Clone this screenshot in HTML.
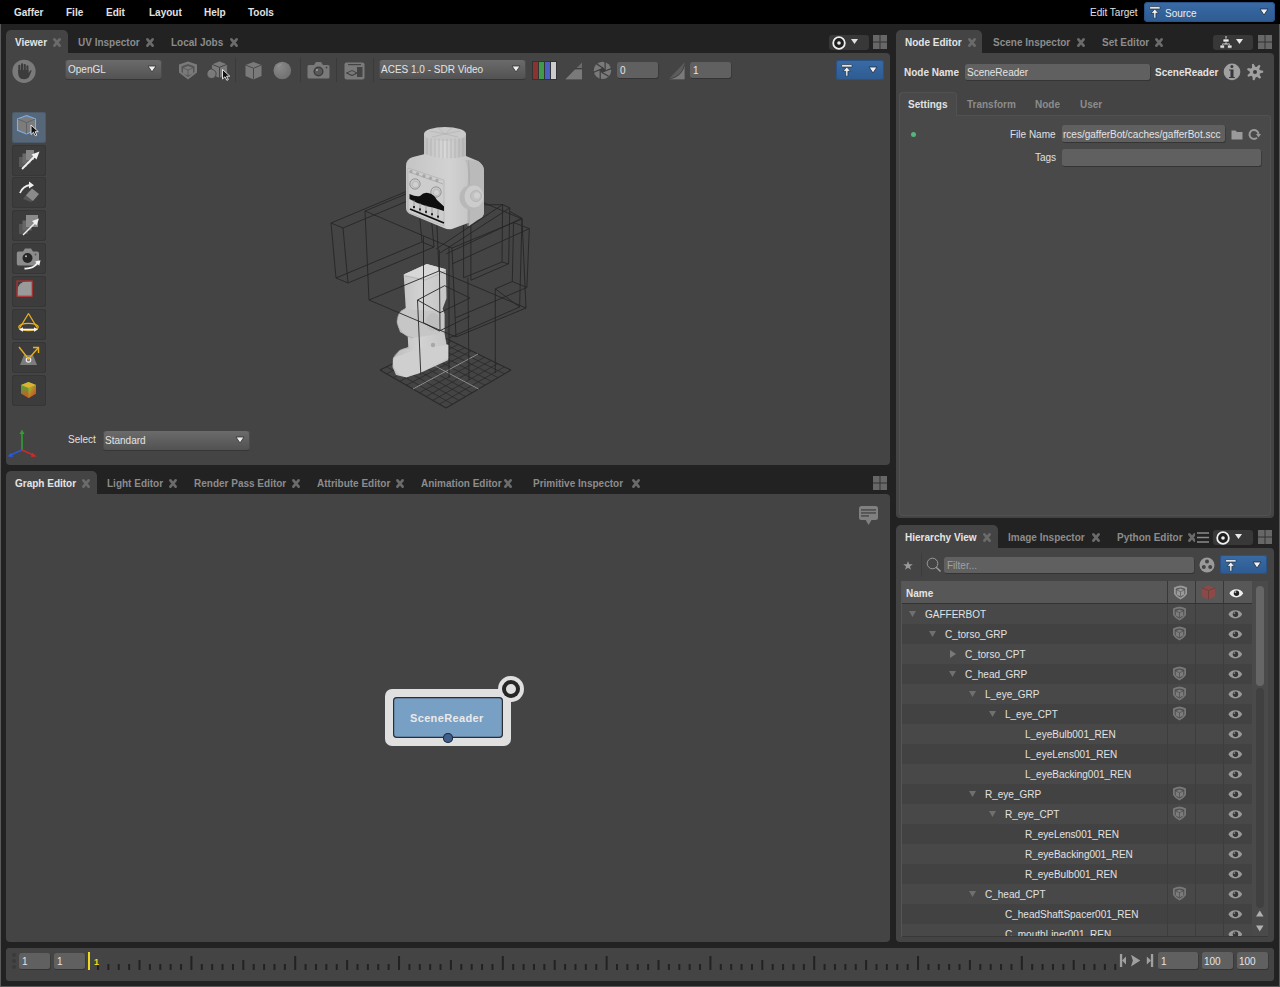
<!DOCTYPE html><html><head><meta charset="utf-8"><style>
*{box-sizing:border-box;margin:0;padding:0}
html,body{width:1280px;height:987px;overflow:hidden}
body{background:#222;font-family:"Liberation Sans",sans-serif;font-size:10px;color:#ddd;position:relative}
.a{position:absolute}
.t{position:absolute;white-space:nowrap;line-height:12px}
.b{font-weight:bold}
.pane{position:absolute;background:#444;border-radius:3px}
.tabbg{position:absolute;background:#444;border-radius:5px 5px 0 0}
.tt{position:absolute;white-space:nowrap;line-height:12px;font-weight:bold;color:#8c8c8c}
.tt.on{color:#e4e4e4}
.fld{position:absolute;background:#606060;border-radius:2.5px;box-shadow:0.6px 1px 0 #343434;overflow:hidden}
.dd{position:absolute;border-radius:3px;background:linear-gradient(#6b6b6b,#525252);box-shadow:0 1px 0 #363636, inset 1px 0 0 #4c4c4c, inset -1px 0 0 #4c4c4c}
svg{position:absolute;overflow:visible}
</style></head><body>
<div class="a" style="left:0;top:24px;width:1px;height:963px;background:#5a5a5a"></div>
<div class="a" style="left:1279px;top:24px;width:1px;height:963px;background:#5a5a5a"></div>
<div class="a" style="left:0;top:986px;width:1280px;height:1px;background:#5a5a5a"></div>
<div class="a" style="left:0;top:0;width:1280px;height:24px;background:#000"></div>
<div class="t" style="left:14px;top:7px;color:#e2e2e2;font-weight:bold;">Gaffer</div>
<div class="t" style="left:66px;top:7px;color:#e2e2e2;font-weight:bold;">File</div>
<div class="t" style="left:106px;top:7px;color:#e2e2e2;font-weight:bold;">Edit</div>
<div class="t" style="left:149px;top:7px;color:#e2e2e2;font-weight:bold;">Layout</div>
<div class="t" style="left:204px;top:7px;color:#e2e2e2;font-weight:bold;">Help</div>
<div class="t" style="left:248px;top:7px;color:#e2e2e2;font-weight:bold;">Tools</div>
<div class="t" style="left:1090px;top:7px;color:#e2e2e2;">Edit Target</div>
<div class="a" style="left:1144px;top:2px;width:131px;height:20px;border-radius:4px;background:linear-gradient(#3a6ba6,#2d5b91);box-shadow:inset 0 0 0 1px #2a5286"></div>
<svg style="left:1149px;top:6px" width="12" height="13"><g stroke="#1c2a3c" stroke-width="0.7" fill="#f2f2f2"><rect x="0.6" y="0.6" width="10.4" height="2.4" rx="0.5"/><path d="M5.8 3L9.6 7.3H6.9V12.2H4.7V7.3H2Z"/></g></svg>
<div class="t" style="left:1165px;top:8px;color:#eeeeee;">Source</div>
<svg style="left:1260px;top:9px" width="8" height="6"><path d="M0 0H8L4.0 6Z" fill="#f2f2f2" stroke="#1c2a3c" stroke-width="0.8" stroke-linejoin="round"/></svg>
<div class="pane" style="left:6px;top:53px;width:884px;height:412px;border-radius:0 4px 4px 4px"></div>
<div class="tabbg" style="left:6px;top:30px;width:62px;height:24px"></div>
<div class="tt on" style="left:15px;top:37px">Viewer</div>
<svg style="left:53px;top:38px" width="8" height="9"><path d="M1.4 1.4L6.6 7.6M6.6 1.4L1.4 7.6" stroke="#6b6b6b" stroke-width="2.7" stroke-linecap="round"/></svg>
<div class="tt" style="left:78px;top:37px">UV Inspector</div>
<svg style="left:146px;top:38px" width="8" height="9"><path d="M1.4 1.4L6.6 7.6M6.6 1.4L1.4 7.6" stroke="#6b6b6b" stroke-width="2.7" stroke-linecap="round"/></svg>
<div class="tt" style="left:171px;top:37px">Local Jobs</div>
<svg style="left:230px;top:38px" width="8" height="9"><path d="M1.4 1.4L6.6 7.6M6.6 1.4L1.4 7.6" stroke="#6b6b6b" stroke-width="2.7" stroke-linecap="round"/></svg>
<div class="a" style="left:829px;top:35px;width:40px;height:15px;border-radius:3px;background:#383838"></div>
<svg style="left:832px;top:36px" width="14" height="14"><circle cx="7" cy="7" r="5.8" stroke="#f0f0f0" stroke-width="1.8" fill="#1e1e1e"/><circle cx="7" cy="7" r="1.8" fill="#f0f0f0"/></svg>
<svg style="left:851px;top:39px" width="7" height="5"><path d="M0 0H7L3.5 5Z" fill="#e0e0e0"/></svg>
<svg style="left:873px;top:35px" width="14" height="14"><rect x="0" y="0" width="14" height="14" fill="#333"/><rect x="0" y="0" width="6.5" height="6.5" fill="#676767"/><rect x="7.5" y="0" width="6.5" height="6.5" fill="#676767"/><rect x="0" y="7.5" width="6.5" height="6.5" fill="#676767"/><rect x="7.5" y="7.5" width="6.5" height="6.5" fill="#676767"/></svg>
<svg style="left:0;top:0" width="890" height="465"><line x1="380.0" y1="370.0" x2="446.0" y2="408.0" stroke="#2a2a2a" stroke-width="1.1"/><line x1="380.0" y1="370.0" x2="445.0" y2="338.0" stroke="#2a2a2a" stroke-width="1.1"/><line x1="386.5" y1="366.8" x2="452.5" y2="404.2" stroke="#2a2a2a" stroke-width="0.8"/><line x1="386.6" y1="373.8" x2="451.6" y2="341.2" stroke="#2a2a2a" stroke-width="0.8"/><line x1="393.0" y1="363.6" x2="459.0" y2="400.4" stroke="#2a2a2a" stroke-width="0.8"/><line x1="393.2" y1="377.6" x2="458.2" y2="344.4" stroke="#2a2a2a" stroke-width="0.8"/><line x1="399.5" y1="360.4" x2="465.5" y2="396.6" stroke="#2a2a2a" stroke-width="0.8"/><line x1="399.8" y1="381.4" x2="464.8" y2="347.6" stroke="#2a2a2a" stroke-width="0.8"/><line x1="406.0" y1="357.2" x2="472.0" y2="392.8" stroke="#2a2a2a" stroke-width="0.8"/><line x1="406.4" y1="385.2" x2="471.4" y2="350.8" stroke="#2a2a2a" stroke-width="0.8"/><line x1="412.5" y1="354.0" x2="478.5" y2="389.0" stroke="#2a2a2a" stroke-width="0.8"/><line x1="413.0" y1="389.0" x2="478.0" y2="354.0" stroke="#2a2a2a" stroke-width="0.8"/><line x1="419.0" y1="350.8" x2="485.0" y2="385.2" stroke="#2a2a2a" stroke-width="0.8"/><line x1="419.6" y1="392.8" x2="484.6" y2="357.2" stroke="#2a2a2a" stroke-width="0.8"/><line x1="425.5" y1="347.6" x2="491.5" y2="381.4" stroke="#2a2a2a" stroke-width="0.8"/><line x1="426.2" y1="396.6" x2="491.2" y2="360.4" stroke="#2a2a2a" stroke-width="0.8"/><line x1="432.0" y1="344.4" x2="498.0" y2="377.6" stroke="#2a2a2a" stroke-width="0.8"/><line x1="432.8" y1="400.4" x2="497.8" y2="363.6" stroke="#2a2a2a" stroke-width="0.8"/><line x1="438.5" y1="341.2" x2="504.5" y2="373.8" stroke="#2a2a2a" stroke-width="0.8"/><line x1="439.4" y1="404.2" x2="504.4" y2="366.8" stroke="#2a2a2a" stroke-width="0.8"/><line x1="445.0" y1="338.0" x2="511.0" y2="370.0" stroke="#2a2a2a" stroke-width="1.1"/><line x1="446.0" y1="408.0" x2="511.0" y2="370.0" stroke="#2a2a2a" stroke-width="1.1"/><line x1="413.0" y1="389.0" x2="478.0" y2="354.0" stroke="#9a9a9a" stroke-width="0.9"/><line x1="412.5" y1="354.0" x2="478.5" y2="389.0" stroke="#9a9a9a" stroke-width="0.9"/><defs><linearGradient id="lg" x1="0" y1="0" x2="1" y2="0"><stop offset="0" stop-color="#bdbdbd"/><stop offset="0.5" stop-color="#d2d2d2"/><stop offset="1" stop-color="#c4c4c4"/></linearGradient></defs><path d="M403.7 274.5L426.8 264L445.9 269.2L446.5 298.2L442.6 308.7L444.6 314L444.6 333.8L446.5 344.3L448.5 345L448.5 360L420 373L406.4 377.5L396 375L392.5 367L393 358L400 350L408.3 347L407.7 336L400 332L397 322L401 311L405.7 308Z" fill="url(#lg)"/><path d="M403.7 274.5L426.8 264L445.9 269.2L425 279Z" fill="#d8d8d8"/><path d="M405 276L425 280L446 271" stroke="#a8a8a8" stroke-width="0.6" fill="none"/><path d="M397 322Q398 310 405 309L444 312L444 333L413 338Q399 335 397 322Z" fill="#c6c6c6"/><path d="M405 309Q397 312 397 322Q399 335 413 338" stroke="#a0a0a0" stroke-width="0.6" fill="none"/><ellipse cx="433" cy="322" rx="7" ry="9" fill="#bebebe"/><path d="M393 358L420 348L448.5 345L448.5 358L420 372L406 377Q392 374 393 358Z" fill="#cfcfcf"/><path d="M393 360Q396 348 410 348" stroke="#a8a8a8" stroke-width="0.6" fill="none"/><circle cx="433" cy="345" r="2.2" fill="#a8a8a8"/><line x1="331.0" y1="223.0" x2="417.0" y2="187.0" stroke="#262626" stroke-width="0.9"/><line x1="331.0" y1="223.0" x2="343.0" y2="228.0" stroke="#262626" stroke-width="0.9"/><line x1="331.0" y1="223.0" x2="336.0" y2="278.0" stroke="#262626" stroke-width="0.9"/><line x1="336.0" y1="278.0" x2="422.0" y2="242.0" stroke="#262626" stroke-width="0.9"/><line x1="336.0" y1="278.0" x2="348.0" y2="283.0" stroke="#262626" stroke-width="0.9"/><line x1="343.0" y1="228.0" x2="429.0" y2="192.0" stroke="#262626" stroke-width="0.9"/><line x1="343.0" y1="228.0" x2="348.0" y2="283.0" stroke="#262626" stroke-width="0.9"/><line x1="348.0" y1="283.0" x2="434.0" y2="247.0" stroke="#262626" stroke-width="0.9"/><line x1="417.0" y1="187.0" x2="429.0" y2="192.0" stroke="#262626" stroke-width="0.9"/><line x1="417.0" y1="187.0" x2="422.0" y2="242.0" stroke="#262626" stroke-width="0.9"/><line x1="422.0" y1="242.0" x2="434.0" y2="247.0" stroke="#262626" stroke-width="0.9"/><line x1="429.0" y1="192.0" x2="434.0" y2="247.0" stroke="#262626" stroke-width="0.9"/><line x1="365.0" y1="211.0" x2="435.0" y2="182.0" stroke="#262626" stroke-width="0.9"/><line x1="365.0" y1="211.0" x2="452.0" y2="248.0" stroke="#262626" stroke-width="0.9"/><line x1="365.0" y1="211.0" x2="369.0" y2="300.0" stroke="#262626" stroke-width="0.9"/><line x1="369.0" y1="300.0" x2="439.0" y2="271.0" stroke="#262626" stroke-width="0.9"/><line x1="369.0" y1="300.0" x2="456.0" y2="337.0" stroke="#262626" stroke-width="0.9"/><line x1="452.0" y1="248.0" x2="522.0" y2="219.0" stroke="#262626" stroke-width="0.9"/><line x1="452.0" y1="248.0" x2="456.0" y2="337.0" stroke="#262626" stroke-width="0.9"/><line x1="456.0" y1="337.0" x2="526.0" y2="308.0" stroke="#262626" stroke-width="0.9"/><line x1="435.0" y1="182.0" x2="522.0" y2="219.0" stroke="#262626" stroke-width="0.9"/><line x1="435.0" y1="182.0" x2="439.0" y2="271.0" stroke="#262626" stroke-width="0.9"/><line x1="439.0" y1="271.0" x2="526.0" y2="308.0" stroke="#262626" stroke-width="0.9"/><line x1="522.0" y1="219.0" x2="526.0" y2="308.0" stroke="#262626" stroke-width="0.9"/><line x1="483.1" y1="204.9" x2="502.6" y2="204.6" stroke="#262626" stroke-width="0.9"/><line x1="502.6" y1="204.6" x2="509.8" y2="207.9" stroke="#262626" stroke-width="0.9"/><line x1="502.6" y1="204.6" x2="502.0" y2="262.0" stroke="#262626" stroke-width="0.9"/><line x1="509.8" y1="207.9" x2="508.6" y2="263.8" stroke="#262626" stroke-width="0.9"/><line x1="502.0" y1="262.0" x2="508.6" y2="263.8" stroke="#262626" stroke-width="0.9"/><line x1="509.8" y1="207.9" x2="440.0" y2="253.0" stroke="#262626" stroke-width="0.9"/><line x1="502.6" y1="204.6" x2="436.0" y2="249.0" stroke="#262626" stroke-width="0.9"/><line x1="508.6" y1="263.8" x2="471.0" y2="280.2" stroke="#262626" stroke-width="0.9"/><line x1="502.0" y1="262.0" x2="463.6" y2="277.8" stroke="#262626" stroke-width="0.9"/><line x1="470.9" y1="221.9" x2="470.9" y2="280.2" stroke="#262626" stroke-width="0.9"/><line x1="463.6" y1="225.0" x2="463.6" y2="277.8" stroke="#262626" stroke-width="0.9"/><line x1="509.8" y1="211.5" x2="522.0" y2="218.2" stroke="#262626" stroke-width="0.9"/><line x1="522.0" y1="218.2" x2="519.6" y2="307.0" stroke="#262626" stroke-width="0.9"/><line x1="513.5" y1="222.5" x2="512.3" y2="281.5" stroke="#262626" stroke-width="0.9"/><line x1="513.5" y1="222.5" x2="529.3" y2="228.6" stroke="#262626" stroke-width="0.9"/><line x1="529.3" y1="228.6" x2="526.9" y2="287.5" stroke="#262626" stroke-width="0.9"/><line x1="512.3" y1="281.5" x2="526.9" y2="287.5" stroke="#262626" stroke-width="0.9"/><line x1="529.3" y1="228.6" x2="452.0" y2="264.0" stroke="#262626" stroke-width="0.9"/><line x1="522.0" y1="218.2" x2="446.0" y2="254.0" stroke="#262626" stroke-width="0.9"/><line x1="526.9" y1="287.5" x2="455.0" y2="318.0" stroke="#262626" stroke-width="0.9"/><line x1="512.3" y1="281.5" x2="495.3" y2="288.8" stroke="#262626" stroke-width="0.9"/><line x1="495.3" y1="288.8" x2="495.3" y2="373.0" stroke="#262626" stroke-width="0.9"/><line x1="467.9" y1="277.8" x2="469.0" y2="380.0" stroke="#262626" stroke-width="0.9"/><line x1="495.3" y1="288.8" x2="519.6" y2="307.0" stroke="#262626" stroke-width="0.9"/><line x1="519.6" y1="307.0" x2="449.0" y2="338.0" stroke="#262626" stroke-width="0.9"/><line x1="449.0" y1="246.0" x2="449.0" y2="378.0" stroke="#262626" stroke-width="0.9"/><line x1="417.5" y1="300.0" x2="444.6" y2="285.7" stroke="#262626" stroke-width="0.9"/><line x1="417.5" y1="300.0" x2="440.0" y2="312.7" stroke="#262626" stroke-width="0.9"/><line x1="440.0" y1="312.7" x2="470.0" y2="298.0" stroke="#262626" stroke-width="0.9"/><line x1="417.5" y1="300.0" x2="420.8" y2="374.6" stroke="#262626" stroke-width="0.9"/><line x1="423.5" y1="236.0" x2="423.5" y2="323.0" stroke="#262626" stroke-width="0.9"/><line x1="439.3" y1="250.0" x2="440.0" y2="331.0" stroke="#262626" stroke-width="0.9"/><line x1="424.0" y1="323.0" x2="439.3" y2="331.0" stroke="#262626" stroke-width="0.9"/><line x1="439.3" y1="331.0" x2="470.0" y2="316.0" stroke="#262626" stroke-width="0.9"/><line x1="444.6" y1="285.7" x2="470.0" y2="298.0" stroke="#262626" stroke-width="0.9"/><defs><linearGradient id="hg" x1="0" y1="0" x2="1" y2="0"><stop offset="0" stop-color="#c4c4c4"/><stop offset="0.55" stop-color="#d2d2d2"/><stop offset="1" stop-color="#bdbdbd"/></linearGradient><linearGradient id="cg" x1="0" y1="0" x2="1" y2="0"><stop offset="0" stop-color="#c0c0c0"/><stop offset="0.5" stop-color="#d8d8d8"/><stop offset="1" stop-color="#b8b8b8"/></linearGradient></defs><path d="M424 134V162Q445 170 466 162V134Z" fill="url(#cg)"/><ellipse cx="445" cy="134" rx="21" ry="7" fill="#c9c9c9"/><path d="M445 134L430 131M445 134L438 128M445 134L452 128M445 134L460 131M445 134L458 137M445 134L432 137" stroke="#b0b0b0" stroke-width="0.6"/><line x1="427" y1="138.1" x2="427" y2="165" stroke="#a8a8a8" stroke-width="0.6"/><line x1="431" y1="138.3" x2="431" y2="165" stroke="#a8a8a8" stroke-width="0.6"/><line x1="435" y1="138.5" x2="435" y2="165" stroke="#a8a8a8" stroke-width="0.6"/><line x1="439" y1="138.7" x2="439" y2="167" stroke="#a8a8a8" stroke-width="0.6"/><line x1="443" y1="138.9" x2="443" y2="167" stroke="#a8a8a8" stroke-width="0.6"/><line x1="447" y1="138.9" x2="447" y2="167" stroke="#a8a8a8" stroke-width="0.6"/><line x1="451" y1="138.7" x2="451" y2="167" stroke="#a8a8a8" stroke-width="0.6"/><line x1="455" y1="138.5" x2="455" y2="165" stroke="#a8a8a8" stroke-width="0.6"/><line x1="459" y1="138.3" x2="459" y2="165" stroke="#a8a8a8" stroke-width="0.6"/><line x1="463" y1="138.1" x2="463" y2="165" stroke="#a8a8a8" stroke-width="0.6"/><path d="M406 166Q406 159 413 157L425 154Q445 162 466 156L478 161Q484 165 484 171V212Q484 217 479 219L452 229Q448 230 444 228L410 214Q406 212 406 208Z" fill="url(#hg)"/><path d="M466 160Q470 168 468 185V226" stroke="#b0b0b0" stroke-width="0.8" fill="none"/><path d="M468 160Q470 170 469 190V226L479 219Q484 217 484 212V171Q484 165 478 161Z" fill="#bababa"/><path d="M468 160Q470 170 469 190V226" stroke="#a0a0a0" stroke-width="0.7" fill="none"/><path d="M408 168L444 180V226L408 212Z" fill="#cdcdcd" stroke="#a5a5a5" stroke-width="0.5"/><path d="M409 172L443 184" stroke="#9a9a9a" stroke-width="0.6"/><circle cx="411.0" cy="171.5" r="1.3" fill="#b0b0b0" stroke="#8a8a8a" stroke-width="0.4"/><circle cx="417.5" cy="173.7" r="1.3" fill="#b0b0b0" stroke="#8a8a8a" stroke-width="0.4"/><circle cx="424.0" cy="175.9" r="1.3" fill="#b0b0b0" stroke="#8a8a8a" stroke-width="0.4"/><circle cx="430.5" cy="178.1" r="1.3" fill="#b0b0b0" stroke="#8a8a8a" stroke-width="0.4"/><circle cx="437.0" cy="180.3" r="1.3" fill="#b0b0b0" stroke="#8a8a8a" stroke-width="0.4"/><circle cx="415" cy="184" r="5.2" fill="#c8c8c8" stroke="#888" stroke-width="0.8"/><circle cx="415.5" cy="184.5" r="3.2" fill="#d0d0d0" stroke="#a0a0a0" stroke-width="0.5"/><circle cx="436" cy="192" r="5.2" fill="#c8c8c8" stroke="#888" stroke-width="0.8"/><circle cx="436.5" cy="192.5" r="3.2" fill="#d0d0d0" stroke="#a0a0a0" stroke-width="0.5"/><path d="M409.5 194Q416 197 420 196Q424 192 428 193Q434 194 437 200L444 206.5V211Q436 208 426 206Q418 204 409.5 199Z" fill="#0e0e0e"/><path d="M410 209L444 223" stroke="#0e0e0e" stroke-width="1.8"/><path d="M414 200V210M420 203V212M426 205V215M432 207V217M438 209V219" stroke="#8a8a8a" stroke-width="0.7"/><rect x="413" y="206.0" width="2" height="2" fill="#222"/><rect x="419" y="208.4" width="2" height="2" fill="#222"/><rect x="425" y="210.8" width="2" height="2" fill="#222"/><rect x="431" y="213.2" width="2" height="2" fill="#222"/><rect x="437" y="215.6" width="2" height="2" fill="#222"/><ellipse cx="471" cy="197.5" rx="11.5" ry="12.5" fill="#b8b8b8"/><ellipse cx="474" cy="196.5" rx="9.5" ry="11" fill="#cccccc"/><circle cx="476" cy="196" r="5.5" fill="#c2c2c2" stroke="#a8a8a8" stroke-width="0.6"/><circle cx="477" cy="195.5" r="3" fill="#d0d0d0"/></svg>
<svg style="left:12px;top:59px" width="24" height="25"><circle cx="12" cy="12.3" r="11.6" fill="#7a7a7a"/><g fill="#3c3c3c"><rect x="6.3" y="5.8" width="2.1" height="9" rx="1"/><rect x="9" y="4.3" width="2.1" height="10" rx="1"/><rect x="11.7" y="5" width="2.1" height="10" rx="1"/><rect x="14.4" y="6.3" width="2" height="9" rx="1"/><path d="M6.3 11H16.4V14.2L18.3 11.6Q19.2 10.7 19.7 11.6L17.2 17.5Q15.8 20.3 12.2 20.3Q8.3 20.3 7 17.8Q6.3 16.5 6.3 14.5Z"/></g></svg>
<div class="dd" style="left:65px;top:60px;width:97px;height:19px"></div>
<div class="t" style="left:68px;top:64px;color:#e4e4e4;">OpenGL</div>
<svg style="left:148px;top:66px" width="8" height="6"><path d="M0 0H8L4.0 6Z" fill="#eeeeee" stroke="#2e2e2e" stroke-width="0.8" stroke-linejoin="round"/></svg>
<svg style="left:178px;top:61px" width="20" height="19" viewBox="0 0 20 19"><path d="M10 0.5L19 3.5V11.5L10 18.5L1 11.5V3.5Z" fill="#7a7a7a"/><path d="M10 3L16.5 5.2V11L10 16L3.5 11V5.2Z" fill="#555"/><path d="M10 5L15 7V12.5L10 14.5L5 12.5V7Z" fill="#7a7a7a"/><path d="M5 7L10 9L15 7M10 9V14.5" stroke="#555" stroke-width="0.8" fill="none"/></svg>
<svg style="left:206px;top:61px" width="24" height="20"><path d="M13.5 0L21.4 3.2V14L13.5 17.3L5.6 14V3.2Z" fill="#7a7a7a" stroke="#3a3a3a" stroke-width="0.6"/><path d="M5.6 3.2L13.5 6.3L21.4 3.2M13.5 6.3V17.3" stroke="#3e3e3e" stroke-width="0.9" fill="none"/><circle cx="5.5" cy="12.9" r="4.6" fill="#7a7a7a" stroke="#3c3c3c" stroke-width="0.8"/><path d="M3 10.5Q4 9 5.5 8.8" stroke="#9a9a9a" stroke-width="0.7" fill="none"/></svg>
<svg style="left:222px;top:69px" width="8" height="12"><path d="M0.5 0.5V10L3 7.8L4.8 11.3L6.3 10.6L4.6 7.2H7.8Z" fill="#111" stroke="#eee" stroke-width="0.9"/></svg>
<div class="a" style="left:235px;top:58px;width:1px;height:24px;background:#3a3a3a"></div>
<div class="a" style="left:300px;top:58px;width:1px;height:24px;background:#3a3a3a"></div>
<div class="a" style="left:336px;top:58px;width:1px;height:24px;background:#3a3a3a"></div>
<div class="a" style="left:373px;top:58px;width:1px;height:24px;background:#3a3a3a"></div>
<svg style="left:245px;top:61px" width="17" height="19"><path d="M8.5 1L16.5 4V15L8.5 18.5L0.5 15V4Z" fill="#7a7a7a"/><path d="M0.5 4L8.5 7.2L16.5 4M8.5 7.2V18.5" stroke="#4a4a4a" stroke-width="1" fill="none"/></svg>
<svg style="left:273px;top:61px" width="19" height="19"><defs><radialGradient id="sg" cx="0.35" cy="0.3" r="0.8"><stop offset="0" stop-color="#8a8a8a"/><stop offset="1" stop-color="#6e6e6e"/></radialGradient></defs><circle cx="9.3" cy="9.5" r="8.8" fill="url(#sg)"/><path d="M4.5 6Q6 3.5 8.5 3" stroke="#9a9a9a" stroke-width="0.8" fill="none"/></svg>
<svg style="left:307px;top:61px" width="23" height="18"><path d="M2 4H7L9 1H14L16 4H21Q22.5 4 22.5 5.5V16Q22.5 17.5 21 17.5H2Q0.5 17.5 0.5 16V5.5Q0.5 4 2 4Z" fill="#7a7a7a"/><circle cx="11.5" cy="10.5" r="5" fill="#3e3e3e"/><circle cx="11.5" cy="10.5" r="3.6" fill="#5a5a5a"/><circle cx="10" cy="9" r="1" fill="#aaa"/><circle cx="19.5" cy="6.5" r="0.9" fill="#444"/></svg>
<svg style="left:344px;top:62px" width="21" height="18"><rect x="0.5" y="0.5" width="20" height="17" rx="2" fill="#7a7a7a"/><rect x="4" y="2" width="13" height="1.2" fill="#444"/><rect x="13" y="5" width="5.5" height="10" fill="#444"/><path d="M2.5 11L8 8.5L13 11L8 13.5Z" stroke="#444" stroke-width="1" fill="none"/><path d="M2.5 11L8 13.5L13 11" stroke="#444" stroke-width="1" fill="none"/></svg>
<div class="dd" style="left:379px;top:60px;width:147px;height:19px"></div>
<div class="t" style="left:381px;top:64px;color:#e4e4e4;">ACES 1.0 - SDR Video</div>
<svg style="left:512px;top:66px" width="8" height="6"><path d="M0 0H8L4.0 6Z" fill="#eeeeee" stroke="#2e2e2e" stroke-width="0.8" stroke-linejoin="round"/></svg>
<svg style="left:532px;top:61px" width="25" height="19"><rect x="0" y="0" width="25" height="19" fill="#333"/><rect x="1" y="1" width="5" height="17" fill="#8a3431"/><rect x="7" y="1" width="5" height="17" fill="#3f9a4a"/><rect x="13" y="1" width="5" height="17" fill="#4a5fc0"/><rect x="19" y="1" width="5" height="17" fill="#cccccc"/></svg>
<svg style="left:565px;top:62px" width="18" height="18"><path d="M0.5 17.2L17 0.5V17.2Z" fill="#6c6c6c"/><path d="M0.5 17.2L10.2 7.4H17V17.2Z" fill="#7a7a7a"/><path d="M10.2 6.7H17.2" stroke="#383838" stroke-width="1.1"/></svg>
<svg style="left:593px;top:61px" width="19" height="19"><circle cx="9.5" cy="9.4" r="8.7" fill="#7a7a7a"/><g stroke="#3c3c3c" stroke-width="1.2" stroke-linecap="round"><path d="M3.4 2.8L9.9 6.9M12.1 1.2V8.8M18.3 7.6L11.4 10.3M15.2 15L9 11.5M7.2 18V9.5M0.8 11.3L7.6 8.3"/></g><path d="M9.9 6.9L12.1 8.8L11.4 10.3L9 11.5L7.2 9.5L7.6 8.3Z" fill="#3c3c3c" stroke="#3c3c3c" stroke-width="1"/></svg>
<div class="fld" style="left:617px;top:62px;width:41px;height:16px"></div>
<div class="t" style="left:620px;top:65px;color:#e4e4e4;">0</div>
<svg style="left:668px;top:62px" width="17" height="18"><path d="M0.5 17.2L16.5 0.5V17.2Z" fill="#5c5c5c"/><path d="M0.5 17.2Q14 15 16.5 3V17.2Z" fill="#7a7a7a"/><path d="M0.5 17.2Q14 15 16.5 3" stroke="#3a3a3a" stroke-width="0.8" fill="none"/></svg>
<div class="fld" style="left:690px;top:62px;width:41px;height:16px"></div>
<div class="t" style="left:693px;top:65px;color:#e4e4e4;">1</div>
<div class="a" style="left:836px;top:60px;width:48px;height:20px;border-radius:3px;background:linear-gradient(#3a6ba6,#2d5b91);box-shadow:inset 0 0 0 1px #2a5286"></div>
<svg style="left:841px;top:64px" width="12" height="13"><g stroke="#1c2a3c" stroke-width="0.7" fill="#f2f2f2"><rect x="0.6" y="0.6" width="10.4" height="2.4" rx="0.5"/><path d="M5.8 3L9.6 7.3H6.9V12.2H4.7V7.3H2Z"/></g></svg>
<svg style="left:869px;top:67px" width="8" height="6"><path d="M0 0H8L4.0 6Z" fill="#f2f2f2" stroke="#1c2a3c" stroke-width="0.8" stroke-linejoin="round"/></svg>
<div class="a" style="left:12px;top:112px;width:34px;height:31px;border-radius:3px;background:#56677a;box-shadow:inset 0 0 0 1px #4d5c6c"></div>
<div class="a" style="left:12px;top:145px;width:34px;height:31px;border-radius:3px;background:#3c3c3c;box-shadow:inset 0 0 0 1px #363636"></div>
<div class="a" style="left:12px;top:177px;width:34px;height:31px;border-radius:3px;background:#3c3c3c;box-shadow:inset 0 0 0 1px #363636"></div>
<div class="a" style="left:12px;top:210px;width:34px;height:31px;border-radius:3px;background:#3c3c3c;box-shadow:inset 0 0 0 1px #363636"></div>
<div class="a" style="left:12px;top:243px;width:34px;height:31px;border-radius:3px;background:#3c3c3c;box-shadow:inset 0 0 0 1px #363636"></div>
<div class="a" style="left:12px;top:276px;width:34px;height:31px;border-radius:3px;background:#3c3c3c;box-shadow:inset 0 0 0 1px #363636"></div>
<div class="a" style="left:12px;top:309px;width:34px;height:31px;border-radius:3px;background:#3c3c3c;box-shadow:inset 0 0 0 1px #363636"></div>
<div class="a" style="left:12px;top:342px;width:34px;height:31px;border-radius:3px;background:#3c3c3c;box-shadow:inset 0 0 0 1px #363636"></div>
<div class="a" style="left:12px;top:375px;width:34px;height:31px;border-radius:3px;background:#3c3c3c;box-shadow:inset 0 0 0 1px #363636"></div>
<svg style="left:17px;top:115px" width="26" height="26"><path d="M9.5 0.6L18.5 4V15.3L9.5 19L0.5 15.3V4Z" fill="#7c7c7c" stroke="#7ab0e8" stroke-width="1.1"/><path d="M0.8 4L9.5 7.6L18.2 4M9.5 7.6V18.6" stroke="#626262" stroke-width="1" fill="none"/><path d="M14 10V19.5L16.5 17.3L18.3 20.8L19.8 20.1L18.1 16.7H21.3Z" fill="#111" stroke="#eee" stroke-width="0.9"/></svg>
<svg style="left:17px;top:147px" width="25" height="25"><rect x="2" y="10" width="8" height="10" fill="#5a5a5a"/><rect x="5.5" y="6.5" width="8" height="10" fill="#6a6a6a"/><rect x="9" y="3" width="8" height="10" fill="#858585"/><path d="M5 22L19 8" stroke="#f0f0f0" stroke-width="1.8"/><path d="M22.5 4.5L14.5 7.5L19.5 12.5Z" fill="#f0f0f0"/></svg>
<svg style="left:17px;top:180px" width="25" height="25"><path d="M6 19L12 11L20 16L14 22Z" fill="#555"/><path d="M9 15.5L15 8.5L22 14L16 21Z" fill="#8a8a8a"/><path d="M3 13Q6 6 13 5" stroke="#f0f0f0" stroke-width="1.8" fill="none"/><path d="M12 1.5L17 5.2L12 8.5Z" fill="#f0f0f0"/></svg>
<svg style="left:17px;top:213px" width="25" height="25"><rect x="2" y="11" width="9" height="10" fill="#555" /><rect x="5.5" y="7.5" width="9" height="10" fill="#666"/><rect x="9" y="2" width="12" height="12" fill="#8a8a8a"/><path d="M6 22L19 9" stroke="#f0f0f0" stroke-width="1.4"/><path d="M22 5.5L15 8L19.5 12.5Z" fill="#f0f0f0"/></svg>
<svg style="left:16px;top:247px" width="26" height="24"><path d="M2.5 4.5H7L9 1.5H15L17 4.5H21Q23 4.5 23 6.5V16.5Q23 18.5 21 18.5H2.5Q0.8 18.5 0.8 16.5V6.5Q0.8 4.5 2.5 4.5Z" fill="#8c8c8c"/><circle cx="11.5" cy="11" r="5" fill="#262626"/><circle cx="10" cy="9.3" r="1" fill="#bbb"/><circle cx="19.5" cy="7.5" r="0.9" fill="#555"/><path d="M8.5 21.5Q17 22 21.5 16" stroke="#f5f5f5" stroke-width="1.8" fill="none"/><path d="M19 14.5L24.5 13.2L23.3 18.8Z" fill="#f5f5f5"/></svg>
<svg style="left:16px;top:280px" width="18" height="18"><path d="M1.5 16.5V11Q1.5 1.5 11 1.5H16V16.5Z" fill="#9a9a9a"/><rect x="1" y="1" width="15.2" height="15.2" fill="none" stroke="#c03030" stroke-width="1.1"/></svg>
<svg style="left:17px;top:312px" width="25" height="25"><path d="M11.5 1.5L3 15.5M11.5 1.5L20 15.5" stroke="#e6b020" stroke-width="1.3" fill="none"/><ellipse cx="11.5" cy="15" rx="9.8" ry="3.6" stroke="#e6b020" stroke-width="1.3" fill="none"/><path d="M5 17.5H18" stroke="#f5f5f5" stroke-width="1.6"/><path d="M2 17.5L6 15.3V19.7Z M21 17.5L17 15.3V19.7Z" fill="#f5f5f5"/></svg>
<svg style="left:17px;top:345px" width="25" height="25"><path d="M7 10H16L20 20H3Z" fill="#7c7c7c"/><circle cx="11.5" cy="15" r="2.8" fill="#eee"/><circle cx="11.5" cy="15" r="1.6" fill="#777"/><path d="M2 2L11.5 14L21 3" stroke="#e6b020" stroke-width="1.4" fill="none"/><path d="M16 2.5H21.5V8" stroke="#e6b020" stroke-width="1.4" fill="none"/></svg>
<svg style="left:17px;top:379px" width="25" height="25"><defs><linearGradient id="rc1" x1="0" y1="0" x2="0" y2="1"><stop offset="0" stop-color="#20c040"/><stop offset="1" stop-color="#e05020"/></linearGradient><linearGradient id="rc2" x1="0" y1="0" x2="1" y2="1"><stop offset="0" stop-color="#90d030"/><stop offset="1" stop-color="#e03020"/></linearGradient></defs><path d="M11.5 3L19 6V14.5L11.5 19L4 14.5V6Z" fill="url(#rc1)"/><path d="M11.5 9L19 6V14.5L11.5 19Z" fill="url(#rc2)"/><path d="M4 6L11.5 3L19 6L11.5 9Z" fill="#e0b030"/></svg>
<svg style="left:6px;top:428px" width="32" height="32"><path d="M16 22V4" stroke="#30a030" stroke-width="1.6"/><path d="M13.5 6L16 1.5L18.5 6Z" fill="#30a030"/><path d="M16 22L28.5 27.5" stroke="#d02828" stroke-width="1.6"/><path d="M26 24.5L30.5 28.5L25 29Z" fill="#d02828"/><path d="M16 22L3.5 27.5" stroke="#2a58d8" stroke-width="1.6"/><path d="M5 24.8L1.5 28.5L7 29Z" fill="#2a58d8"/></svg>
<div class="t" style="left:68px;top:434px;color:#e0e0e0;">Select</div>
<div class="dd" style="left:103px;top:431px;width:147px;height:19px"></div>
<div class="t" style="left:105px;top:435px;color:#e4e4e4;">Standard</div>
<svg style="left:236px;top:437px" width="8" height="6"><path d="M0 0H8L4.0 6Z" fill="#eeeeee" stroke="#2e2e2e" stroke-width="0.8" stroke-linejoin="round"/></svg>
<div class="pane" style="left:6px;top:494px;width:884px;height:448px;border-radius:0 4px 4px 4px"></div>
<div class="tabbg" style="left:6px;top:471px;width:91px;height:24px"></div>
<div class="tt on" style="left:15px;top:478px">Graph Editor</div>
<svg style="left:82px;top:479px" width="8" height="9"><path d="M1.4 1.4L6.6 7.6M6.6 1.4L1.4 7.6" stroke="#6b6b6b" stroke-width="2.7" stroke-linecap="round"/></svg>
<div class="tt" style="left:107px;top:478px">Light Editor</div>
<svg style="left:169px;top:479px" width="8" height="9"><path d="M1.4 1.4L6.6 7.6M6.6 1.4L1.4 7.6" stroke="#6b6b6b" stroke-width="2.7" stroke-linecap="round"/></svg>
<div class="tt" style="left:194px;top:478px">Render Pass Editor</div>
<svg style="left:292px;top:479px" width="8" height="9"><path d="M1.4 1.4L6.6 7.6M6.6 1.4L1.4 7.6" stroke="#6b6b6b" stroke-width="2.7" stroke-linecap="round"/></svg>
<div class="tt" style="left:317px;top:478px">Attribute Editor</div>
<svg style="left:396px;top:479px" width="8" height="9"><path d="M1.4 1.4L6.6 7.6M6.6 1.4L1.4 7.6" stroke="#6b6b6b" stroke-width="2.7" stroke-linecap="round"/></svg>
<div class="tt" style="left:421px;top:478px">Animation Editor</div>
<svg style="left:504px;top:479px" width="8" height="9"><path d="M1.4 1.4L6.6 7.6M6.6 1.4L1.4 7.6" stroke="#6b6b6b" stroke-width="2.7" stroke-linecap="round"/></svg>
<div class="tt" style="left:533px;top:478px">Primitive Inspector</div>
<svg style="left:632px;top:479px" width="8" height="9"><path d="M1.4 1.4L6.6 7.6M6.6 1.4L1.4 7.6" stroke="#6b6b6b" stroke-width="2.7" stroke-linecap="round"/></svg>
<svg style="left:873px;top:476px" width="14" height="14"><rect x="0" y="0" width="14" height="14" fill="#333"/><rect x="0" y="0" width="6.5" height="6.5" fill="#676767"/><rect x="7.5" y="0" width="6.5" height="6.5" fill="#676767"/><rect x="0" y="7.5" width="6.5" height="6.5" fill="#676767"/><rect x="7.5" y="7.5" width="6.5" height="6.5" fill="#676767"/></svg>
<div class="pane" style="left:896px;top:53px;width:378px;height:465px;border-radius:0 4px 4px 4px"></div>
<div class="tabbg" style="left:896px;top:30px;width:86px;height:24px"></div>
<div class="tt on" style="left:905px;top:37px">Node Editor</div>
<svg style="left:968px;top:38px" width="8" height="9"><path d="M1.4 1.4L6.6 7.6M6.6 1.4L1.4 7.6" stroke="#6b6b6b" stroke-width="2.7" stroke-linecap="round"/></svg>
<div class="tt" style="left:993px;top:37px">Scene Inspector</div>
<svg style="left:1077px;top:38px" width="8" height="9"><path d="M1.4 1.4L6.6 7.6M6.6 1.4L1.4 7.6" stroke="#6b6b6b" stroke-width="2.7" stroke-linecap="round"/></svg>
<div class="tt" style="left:1102px;top:37px">Set Editor</div>
<svg style="left:1155px;top:38px" width="8" height="9"><path d="M1.4 1.4L6.6 7.6M6.6 1.4L1.4 7.6" stroke="#6b6b6b" stroke-width="2.7" stroke-linecap="round"/></svg>
<svg style="left:1258px;top:35px" width="14" height="14"><rect x="0" y="0" width="14" height="14" fill="#333"/><rect x="0" y="0" width="6.5" height="6.5" fill="#676767"/><rect x="7.5" y="0" width="6.5" height="6.5" fill="#676767"/><rect x="0" y="7.5" width="6.5" height="6.5" fill="#676767"/><rect x="7.5" y="7.5" width="6.5" height="6.5" fill="#676767"/></svg>
<div class="pane" style="left:896px;top:548px;width:378px;height:394px;border-radius:0 4px 4px 4px"></div>
<div class="tabbg" style="left:896px;top:525px;width:102px;height:24px"></div>
<div class="tt on" style="left:905px;top:532px">Hierarchy View</div>
<svg style="left:983px;top:533px" width="8" height="9"><path d="M1.4 1.4L6.6 7.6M6.6 1.4L1.4 7.6" stroke="#6b6b6b" stroke-width="2.7" stroke-linecap="round"/></svg>
<div class="tt" style="left:1008px;top:532px">Image Inspector</div>
<svg style="left:1092px;top:533px" width="8" height="9"><path d="M1.4 1.4L6.6 7.6M6.6 1.4L1.4 7.6" stroke="#6b6b6b" stroke-width="2.7" stroke-linecap="round"/></svg>
<div class="tt" style="left:1117px;top:532px">Python Editor</div>
<svg style="left:1188px;top:533px" width="8" height="9"><path d="M1.4 1.4L6.6 7.6M6.6 1.4L1.4 7.6" stroke="#6b6b6b" stroke-width="2.7" stroke-linecap="round"/></svg>
<svg style="left:1258px;top:530px" width="14" height="14"><rect x="0" y="0" width="14" height="14" fill="#333"/><rect x="0" y="0" width="6.5" height="6.5" fill="#676767"/><rect x="7.5" y="0" width="6.5" height="6.5" fill="#676767"/><rect x="0" y="7.5" width="6.5" height="6.5" fill="#676767"/><rect x="7.5" y="7.5" width="6.5" height="6.5" fill="#676767"/></svg>
<div class="a" style="left:1213px;top:35px;width:40px;height:15px;border-radius:3px;background:#383838"></div>
<svg style="left:1219px;top:36px" width="14" height="13"><path d="M7 0V3M7 6V8M3.5 8H10.5M3.5 8V9M10.5 8V9" stroke="#ddd" stroke-width="1"/><rect x="4" y="3" width="6" height="3" rx="0.8" fill="#eee" stroke="#222" stroke-width="0.6"/><rect x="1" y="9" width="4.5" height="3.2" rx="0.8" fill="#ddd" stroke="#222" stroke-width="0.6"/><rect x="8.5" y="9" width="4.5" height="3.2" rx="0.8" fill="#ddd" stroke="#222" stroke-width="0.6"/></svg>
<svg style="left:1236px;top:39px" width="7" height="5"><path d="M0 0H7L3.5 5Z" fill="#e8e8e8"/></svg>
<div class="t" style="left:904px;top:67px;color:#e2e2e2;font-weight:bold;">Node Name</div>
<div class="fld" style="left:965px;top:64px;width:185px;height:16px"></div>
<div class="t" style="left:967px;top:67px;color:#e4e4e4;">SceneReader</div>
<div class="t" style="left:1155px;top:67px;color:#e2e2e2;font-weight:bold;">SceneReader</div>
<svg style="left:1223px;top:63px" width="18" height="18"><circle cx="9" cy="8.9" r="8.3" fill="#a0a0a0"/><circle cx="8.9" cy="3.5" r="1.5" fill="#383838"/><path d="M6 6.4H10.5V14H11.8V14.9H6V14H7.5V7.4H6Z" fill="#383838"/></svg>
<svg style="left:1246px;top:63px" width="18" height="18"><circle cx="9" cy="9" r="5.2" fill="#a0a0a0"/><path d="M12.90 6.89 L17.14 7.67 L17.24 9.47 L13.09 10.69Z M13.08 10.73 L15.11 14.54 L13.77 15.73 L10.23 13.25Z M10.19 13.27 L8.48 17.23 L6.71 16.92 L6.44 12.62Z M6.40 12.59 L2.24 13.73 L1.38 12.15 L4.58 9.26Z M4.58 9.21 L1.09 6.66 L1.78 5.00 L6.04 5.70Z M6.08 5.67 L5.89 1.36 L7.63 0.87 L9.73 4.63Z M9.78 4.64 L13.04 1.81 L14.50 2.85 L12.87 6.85Z" fill="#a0a0a0"/><circle cx="9" cy="9" r="2" fill="#3c3c3c"/></svg>
<div class="a" style="left:899px;top:92px;width:58px;height:26px;border-radius:4px 4px 0 0;background:#494949;box-shadow:inset 1px 1px 0 #515151, inset -1px 0 0 #515151"></div>
<div class="a" style="left:899px;top:115px;width:372px;height:401px;border-radius:0 4px 4px 4px;background:#494949;box-shadow:inset 0 0 0 1px #515151"></div>
<div class="a" style="left:900px;top:114px;width:56px;height:3px;background:#494949"></div>
<div class="t" style="left:908px;top:99px;color:#e2e2e2;font-weight:bold;">Settings</div>
<div class="t" style="left:967px;top:99px;color:#8c8c8c;font-weight:bold;">Transform</div>
<div class="t" style="left:1035px;top:99px;color:#8c8c8c;font-weight:bold;">Node</div>
<div class="t" style="left:1080px;top:99px;color:#8c8c8c;font-weight:bold;">User</div>
<div class="a" style="left:910.5px;top:131.5px;width:5px;height:5px;border-radius:2.5px;background:#55b57c"></div>
<div class="t" style="left:1010px;top:129px;color:#e0e0e0;">File Name</div>
<div class="fld" style="left:1062px;top:125px;width:163px;height:17px"></div>
<div class="t" style="left:1063px;top:129px;color:#e4e4e4;">rces/gafferBot/caches/gafferBot.scc</div>
<svg style="left:1231px;top:129px" width="12" height="11"><path d="M0.5 1.5H4.5L6 3H11.5V10.5H0.5Z" fill="#9a9a9a"/></svg>
<svg style="left:1248px;top:128px" width="14" height="13"><path d="M10.5 5.8A4.5 4.5 0 1 0 9 9.8" stroke="#9a9a9a" stroke-width="2" fill="none"/><path d="M8 6H13L10.5 9.5Z" fill="#9a9a9a"/></svg>
<div class="t" style="left:1035px;top:152px;color:#e0e0e0;">Tags</div>
<div class="fld" style="left:1062px;top:149px;width:199px;height:17px"></div>
<div class="a" style="left:1195px;top:527px;width:16px;height:20px;background:#222"></div>
<svg style="left:1197px;top:532px" width="12" height="11"><path d="M0 1H12M0 5.5H12M0 10H12" stroke="#8a8a8a" stroke-width="1.5"/></svg>
<div class="a" style="left:1213px;top:530px;width:40px;height:15px;border-radius:3px;background:#383838"></div>
<svg style="left:1216px;top:531px" width="14" height="14"><circle cx="7" cy="7" r="5.8" stroke="#f0f0f0" stroke-width="1.8" fill="#1e1e1e"/><circle cx="7" cy="7" r="1.8" fill="#f0f0f0"/></svg>
<svg style="left:1235px;top:534px" width="7" height="5"><path d="M0 0H7L3.5 5Z" fill="#e8e8e8"/></svg>
<svg style="left:903px;top:561px" width="10" height="9"><path d="M5 0L6.2 3.3H9.8L6.9 5.4L8 8.8L5 6.7L2 8.8L3.1 5.4L0.2 3.3H3.8Z" fill="#9a9a9a"/></svg>
<div class="a" style="left:921px;top:553px;width:1px;height:24px;background:#3c3c3c"></div>
<svg style="left:926px;top:557px" width="16" height="16"><circle cx="6.5" cy="6.5" r="5.3" stroke="#9a9a9a" stroke-width="1" fill="none"/><path d="M10.2 10.2L14.5 14.5" stroke="#9a9a9a" stroke-width="1.6"/></svg>
<div class="fld" style="left:944px;top:557px;width:250px;height:16px"></div>
<div class="t" style="left:947px;top:560px;color:#a0a0a0;">Filter...</div>
<svg style="left:1199px;top:557px" width="16" height="16"><circle cx="8" cy="8" r="7.5" fill="#9a9a9a"/><circle cx="8" cy="4.6" r="2" fill="#444"/><circle cx="4.8" cy="10" r="2" fill="#444"/><circle cx="11.2" cy="10" r="2" fill="#444"/></svg>
<div class="a" style="left:1220px;top:555px;width:47px;height:19px;border-radius:3px;background:linear-gradient(#3a6ba6,#2d5b91);box-shadow:inset 0 0 0 1px #2a5286"></div>
<svg style="left:1225px;top:559px" width="12" height="13"><g stroke="#1c2a3c" stroke-width="0.7" fill="#f2f2f2"><rect x="0.6" y="0.6" width="10.4" height="2.4" rx="0.5"/><path d="M5.8 3L9.6 7.3H6.9V12.2H4.7V7.3H2Z"/></g></svg>
<svg style="left:1253px;top:562px" width="8" height="6"><path d="M0 0H8L4.0 6Z" fill="#f2f2f2" stroke="#1c2a3c" stroke-width="0.8" stroke-linejoin="round"/></svg>
<div class="a" style="left:901px;top:581px;width:367px;height:356px;background:#4a4a4a;box-shadow:inset 1px 0 0 #555, inset 0 -1px 0 #383838"></div>
<div class="a" style="left:902px;top:581px;width:350px;height:22px;background:#575757"></div>
<div class="a" style="left:902px;top:603px;width:350px;height:1px;background:#333"></div>
<div class="a" style="left:1167px;top:581px;width:1px;height:22px;background:#383838"></div>
<div class="a" style="left:1195px;top:581px;width:1px;height:22px;background:#383838"></div>
<div class="a" style="left:1223px;top:581px;width:1px;height:22px;background:#383838"></div>
<div class="t" style="left:906px;top:588px;color:#e4e4e4;font-weight:bold;">Name</div>
<svg style="left:1173px;top:585px" width="15" height="15" viewBox="0 0 15 15"><path d="M7.5 0.4Q11 0.8 14 2.4V9Q12 12.2 7.5 14.6Q3 12.2 1 9V2.4Q4 0.8 7.5 0.4Z" fill="#9a9a9a"/><path d="M7.5 2.4Q10 2.7 12.2 3.7V8.4Q10.8 10.8 7.5 12.6Q4.2 10.8 2.8 8.4V3.7Q5 2.7 7.5 2.4Z" fill="#575757"/><path d="M7.5 3.6L11.3 5.1V9.6L7.5 11.4L3.7 9.6V5.1Z" fill="#9a9a9a"/><path d="M3.7 5.1L7.5 6.6L11.3 5.1M7.5 6.6V11.4" stroke="#575757" stroke-width="0.7" fill="none"/></svg>
<svg style="left:1201px;top:585px" width="15" height="15"><path d="M7.5 0.5L14 3V11.5L7.5 14.5L1 11.5V3Z" fill="#8a4a48"/><path d="M1 3L7.5 5.5L14 3M7.5 5.5V14.5" stroke="#6a3a38" stroke-width="0.8" fill="none"/></svg>
<svg style="left:1229px;top:589px" width="15" height="9"><path d="M0.4 4.3Q2.5 0.2 7.3 0.2Q12.1 0.2 14.2 4.3Q12.1 8.4 7.3 8.4Q2.5 8.4 0.4 4.3Z" fill="#f0f0f0"/><circle cx="7.5" cy="4.3" r="2.7" fill="#222"/><circle cx="6.4" cy="3.1" r="0.9" fill="#ccc"/></svg>
<div class="a" style="left:902px;top:604px;width:350px;height:332px;overflow:hidden">
<div class="a" style="left:0;top:0px;width:350px;height:20px;background:#484848"></div>
<div class="a" style="left:265px;top:0px;width:1px;height:20px;background:#3d3d3d"></div>
<div class="a" style="left:293px;top:0px;width:1px;height:20px;background:#3d3d3d"></div>
<div class="a" style="left:321px;top:0px;width:1px;height:20px;background:#3d3d3d"></div>
<svg style="left:7px;top:7px" width="7" height="6"><path d="M0 0H7L3.5 6Z" fill="#707070"/></svg>
<div class="t" style="left:23px;top:5px;color:#e2e2e2">GAFFERBOT</div>
<svg style="left:270px;top:2px" width="15" height="15" viewBox="0 0 15 15"><path d="M7.5 0.4Q11 0.8 14 2.4V9Q12 12.2 7.5 14.6Q3 12.2 1 9V2.4Q4 0.8 7.5 0.4Z" fill="#787878"/><path d="M7.5 2.4Q10 2.7 12.2 3.7V8.4Q10.8 10.8 7.5 12.6Q4.2 10.8 2.8 8.4V3.7Q5 2.7 7.5 2.4Z" fill="#4c4c4c"/><path d="M7.5 3.6L11.3 5.1V9.6L7.5 11.4L3.7 9.6V5.1Z" fill="#7c7c7c"/><path d="M3.7 5.1L7.5 6.6L11.3 5.1M7.5 6.6V11.4" stroke="#4c4c4c" stroke-width="0.7" fill="none"/></svg>
<svg style="left:326px;top:6px" width="15" height="9"><path d="M0.4 4.3Q2.5 0.2 7.3 0.2Q12.1 0.2 14.2 4.3Q12.1 8.4 7.3 8.4Q2.5 8.4 0.4 4.3Z" fill="#9a9a9a"/><circle cx="7.5" cy="4.3" r="2.7" fill="#353535"/><circle cx="6.4" cy="3.1" r="0.9" fill="#8a8a8a"/></svg>
<div class="a" style="left:0;top:20px;width:350px;height:20px;background:#424242"></div>
<div class="a" style="left:265px;top:20px;width:1px;height:20px;background:#3d3d3d"></div>
<div class="a" style="left:293px;top:20px;width:1px;height:20px;background:#3d3d3d"></div>
<div class="a" style="left:321px;top:20px;width:1px;height:20px;background:#3d3d3d"></div>
<svg style="left:27px;top:27px" width="7" height="6"><path d="M0 0H7L3.5 6Z" fill="#707070"/></svg>
<div class="t" style="left:43px;top:25px;color:#e2e2e2">C_torso_GRP</div>
<svg style="left:270px;top:22px" width="15" height="15" viewBox="0 0 15 15"><path d="M7.5 0.4Q11 0.8 14 2.4V9Q12 12.2 7.5 14.6Q3 12.2 1 9V2.4Q4 0.8 7.5 0.4Z" fill="#787878"/><path d="M7.5 2.4Q10 2.7 12.2 3.7V8.4Q10.8 10.8 7.5 12.6Q4.2 10.8 2.8 8.4V3.7Q5 2.7 7.5 2.4Z" fill="#4c4c4c"/><path d="M7.5 3.6L11.3 5.1V9.6L7.5 11.4L3.7 9.6V5.1Z" fill="#7c7c7c"/><path d="M3.7 5.1L7.5 6.6L11.3 5.1M7.5 6.6V11.4" stroke="#4c4c4c" stroke-width="0.7" fill="none"/></svg>
<svg style="left:326px;top:26px" width="15" height="9"><path d="M0.4 4.3Q2.5 0.2 7.3 0.2Q12.1 0.2 14.2 4.3Q12.1 8.4 7.3 8.4Q2.5 8.4 0.4 4.3Z" fill="#9a9a9a"/><circle cx="7.5" cy="4.3" r="2.7" fill="#353535"/><circle cx="6.4" cy="3.1" r="0.9" fill="#8a8a8a"/></svg>
<div class="a" style="left:0;top:40px;width:350px;height:20px;background:#484848"></div>
<div class="a" style="left:265px;top:40px;width:1px;height:20px;background:#3d3d3d"></div>
<div class="a" style="left:293px;top:40px;width:1px;height:20px;background:#3d3d3d"></div>
<div class="a" style="left:321px;top:40px;width:1px;height:20px;background:#3d3d3d"></div>
<svg style="left:48px;top:46px" width="6" height="8"><path d="M0 0V8L6 4Z" fill="#7a7a7a"/></svg>
<div class="t" style="left:63px;top:45px;color:#e2e2e2">C_torso_CPT</div>
<svg style="left:326px;top:46px" width="15" height="9"><path d="M0.4 4.3Q2.5 0.2 7.3 0.2Q12.1 0.2 14.2 4.3Q12.1 8.4 7.3 8.4Q2.5 8.4 0.4 4.3Z" fill="#9a9a9a"/><circle cx="7.5" cy="4.3" r="2.7" fill="#353535"/><circle cx="6.4" cy="3.1" r="0.9" fill="#8a8a8a"/></svg>
<div class="a" style="left:0;top:60px;width:350px;height:20px;background:#424242"></div>
<div class="a" style="left:265px;top:60px;width:1px;height:20px;background:#3d3d3d"></div>
<div class="a" style="left:293px;top:60px;width:1px;height:20px;background:#3d3d3d"></div>
<div class="a" style="left:321px;top:60px;width:1px;height:20px;background:#3d3d3d"></div>
<svg style="left:47px;top:67px" width="7" height="6"><path d="M0 0H7L3.5 6Z" fill="#707070"/></svg>
<div class="t" style="left:63px;top:65px;color:#e2e2e2">C_head_GRP</div>
<svg style="left:270px;top:62px" width="15" height="15" viewBox="0 0 15 15"><path d="M7.5 0.4Q11 0.8 14 2.4V9Q12 12.2 7.5 14.6Q3 12.2 1 9V2.4Q4 0.8 7.5 0.4Z" fill="#787878"/><path d="M7.5 2.4Q10 2.7 12.2 3.7V8.4Q10.8 10.8 7.5 12.6Q4.2 10.8 2.8 8.4V3.7Q5 2.7 7.5 2.4Z" fill="#4c4c4c"/><path d="M7.5 3.6L11.3 5.1V9.6L7.5 11.4L3.7 9.6V5.1Z" fill="#7c7c7c"/><path d="M3.7 5.1L7.5 6.6L11.3 5.1M7.5 6.6V11.4" stroke="#4c4c4c" stroke-width="0.7" fill="none"/></svg>
<svg style="left:326px;top:66px" width="15" height="9"><path d="M0.4 4.3Q2.5 0.2 7.3 0.2Q12.1 0.2 14.2 4.3Q12.1 8.4 7.3 8.4Q2.5 8.4 0.4 4.3Z" fill="#9a9a9a"/><circle cx="7.5" cy="4.3" r="2.7" fill="#353535"/><circle cx="6.4" cy="3.1" r="0.9" fill="#8a8a8a"/></svg>
<div class="a" style="left:0;top:80px;width:350px;height:20px;background:#484848"></div>
<div class="a" style="left:265px;top:80px;width:1px;height:20px;background:#3d3d3d"></div>
<div class="a" style="left:293px;top:80px;width:1px;height:20px;background:#3d3d3d"></div>
<div class="a" style="left:321px;top:80px;width:1px;height:20px;background:#3d3d3d"></div>
<svg style="left:67px;top:87px" width="7" height="6"><path d="M0 0H7L3.5 6Z" fill="#707070"/></svg>
<div class="t" style="left:83px;top:85px;color:#e2e2e2">L_eye_GRP</div>
<svg style="left:270px;top:82px" width="15" height="15" viewBox="0 0 15 15"><path d="M7.5 0.4Q11 0.8 14 2.4V9Q12 12.2 7.5 14.6Q3 12.2 1 9V2.4Q4 0.8 7.5 0.4Z" fill="#787878"/><path d="M7.5 2.4Q10 2.7 12.2 3.7V8.4Q10.8 10.8 7.5 12.6Q4.2 10.8 2.8 8.4V3.7Q5 2.7 7.5 2.4Z" fill="#4c4c4c"/><path d="M7.5 3.6L11.3 5.1V9.6L7.5 11.4L3.7 9.6V5.1Z" fill="#7c7c7c"/><path d="M3.7 5.1L7.5 6.6L11.3 5.1M7.5 6.6V11.4" stroke="#4c4c4c" stroke-width="0.7" fill="none"/></svg>
<svg style="left:326px;top:86px" width="15" height="9"><path d="M0.4 4.3Q2.5 0.2 7.3 0.2Q12.1 0.2 14.2 4.3Q12.1 8.4 7.3 8.4Q2.5 8.4 0.4 4.3Z" fill="#9a9a9a"/><circle cx="7.5" cy="4.3" r="2.7" fill="#353535"/><circle cx="6.4" cy="3.1" r="0.9" fill="#8a8a8a"/></svg>
<div class="a" style="left:0;top:100px;width:350px;height:20px;background:#424242"></div>
<div class="a" style="left:265px;top:100px;width:1px;height:20px;background:#3d3d3d"></div>
<div class="a" style="left:293px;top:100px;width:1px;height:20px;background:#3d3d3d"></div>
<div class="a" style="left:321px;top:100px;width:1px;height:20px;background:#3d3d3d"></div>
<svg style="left:87px;top:107px" width="7" height="6"><path d="M0 0H7L3.5 6Z" fill="#707070"/></svg>
<div class="t" style="left:103px;top:105px;color:#e2e2e2">L_eye_CPT</div>
<svg style="left:270px;top:102px" width="15" height="15" viewBox="0 0 15 15"><path d="M7.5 0.4Q11 0.8 14 2.4V9Q12 12.2 7.5 14.6Q3 12.2 1 9V2.4Q4 0.8 7.5 0.4Z" fill="#787878"/><path d="M7.5 2.4Q10 2.7 12.2 3.7V8.4Q10.8 10.8 7.5 12.6Q4.2 10.8 2.8 8.4V3.7Q5 2.7 7.5 2.4Z" fill="#4c4c4c"/><path d="M7.5 3.6L11.3 5.1V9.6L7.5 11.4L3.7 9.6V5.1Z" fill="#7c7c7c"/><path d="M3.7 5.1L7.5 6.6L11.3 5.1M7.5 6.6V11.4" stroke="#4c4c4c" stroke-width="0.7" fill="none"/></svg>
<svg style="left:326px;top:106px" width="15" height="9"><path d="M0.4 4.3Q2.5 0.2 7.3 0.2Q12.1 0.2 14.2 4.3Q12.1 8.4 7.3 8.4Q2.5 8.4 0.4 4.3Z" fill="#9a9a9a"/><circle cx="7.5" cy="4.3" r="2.7" fill="#353535"/><circle cx="6.4" cy="3.1" r="0.9" fill="#8a8a8a"/></svg>
<div class="a" style="left:0;top:120px;width:350px;height:20px;background:#484848"></div>
<div class="a" style="left:265px;top:120px;width:1px;height:20px;background:#3d3d3d"></div>
<div class="a" style="left:293px;top:120px;width:1px;height:20px;background:#3d3d3d"></div>
<div class="a" style="left:321px;top:120px;width:1px;height:20px;background:#3d3d3d"></div>
<div class="t" style="left:123px;top:125px;color:#e2e2e2">L_eyeBulb001_REN</div>
<svg style="left:326px;top:126px" width="15" height="9"><path d="M0.4 4.3Q2.5 0.2 7.3 0.2Q12.1 0.2 14.2 4.3Q12.1 8.4 7.3 8.4Q2.5 8.4 0.4 4.3Z" fill="#9a9a9a"/><circle cx="7.5" cy="4.3" r="2.7" fill="#353535"/><circle cx="6.4" cy="3.1" r="0.9" fill="#8a8a8a"/></svg>
<div class="a" style="left:0;top:140px;width:350px;height:20px;background:#424242"></div>
<div class="a" style="left:265px;top:140px;width:1px;height:20px;background:#3d3d3d"></div>
<div class="a" style="left:293px;top:140px;width:1px;height:20px;background:#3d3d3d"></div>
<div class="a" style="left:321px;top:140px;width:1px;height:20px;background:#3d3d3d"></div>
<div class="t" style="left:123px;top:145px;color:#e2e2e2">L_eyeLens001_REN</div>
<svg style="left:326px;top:146px" width="15" height="9"><path d="M0.4 4.3Q2.5 0.2 7.3 0.2Q12.1 0.2 14.2 4.3Q12.1 8.4 7.3 8.4Q2.5 8.4 0.4 4.3Z" fill="#9a9a9a"/><circle cx="7.5" cy="4.3" r="2.7" fill="#353535"/><circle cx="6.4" cy="3.1" r="0.9" fill="#8a8a8a"/></svg>
<div class="a" style="left:0;top:160px;width:350px;height:20px;background:#484848"></div>
<div class="a" style="left:265px;top:160px;width:1px;height:20px;background:#3d3d3d"></div>
<div class="a" style="left:293px;top:160px;width:1px;height:20px;background:#3d3d3d"></div>
<div class="a" style="left:321px;top:160px;width:1px;height:20px;background:#3d3d3d"></div>
<div class="t" style="left:123px;top:165px;color:#e2e2e2">L_eyeBacking001_REN</div>
<svg style="left:326px;top:166px" width="15" height="9"><path d="M0.4 4.3Q2.5 0.2 7.3 0.2Q12.1 0.2 14.2 4.3Q12.1 8.4 7.3 8.4Q2.5 8.4 0.4 4.3Z" fill="#9a9a9a"/><circle cx="7.5" cy="4.3" r="2.7" fill="#353535"/><circle cx="6.4" cy="3.1" r="0.9" fill="#8a8a8a"/></svg>
<div class="a" style="left:0;top:180px;width:350px;height:20px;background:#424242"></div>
<div class="a" style="left:265px;top:180px;width:1px;height:20px;background:#3d3d3d"></div>
<div class="a" style="left:293px;top:180px;width:1px;height:20px;background:#3d3d3d"></div>
<div class="a" style="left:321px;top:180px;width:1px;height:20px;background:#3d3d3d"></div>
<svg style="left:67px;top:187px" width="7" height="6"><path d="M0 0H7L3.5 6Z" fill="#707070"/></svg>
<div class="t" style="left:83px;top:185px;color:#e2e2e2">R_eye_GRP</div>
<svg style="left:270px;top:182px" width="15" height="15" viewBox="0 0 15 15"><path d="M7.5 0.4Q11 0.8 14 2.4V9Q12 12.2 7.5 14.6Q3 12.2 1 9V2.4Q4 0.8 7.5 0.4Z" fill="#787878"/><path d="M7.5 2.4Q10 2.7 12.2 3.7V8.4Q10.8 10.8 7.5 12.6Q4.2 10.8 2.8 8.4V3.7Q5 2.7 7.5 2.4Z" fill="#4c4c4c"/><path d="M7.5 3.6L11.3 5.1V9.6L7.5 11.4L3.7 9.6V5.1Z" fill="#7c7c7c"/><path d="M3.7 5.1L7.5 6.6L11.3 5.1M7.5 6.6V11.4" stroke="#4c4c4c" stroke-width="0.7" fill="none"/></svg>
<svg style="left:326px;top:186px" width="15" height="9"><path d="M0.4 4.3Q2.5 0.2 7.3 0.2Q12.1 0.2 14.2 4.3Q12.1 8.4 7.3 8.4Q2.5 8.4 0.4 4.3Z" fill="#9a9a9a"/><circle cx="7.5" cy="4.3" r="2.7" fill="#353535"/><circle cx="6.4" cy="3.1" r="0.9" fill="#8a8a8a"/></svg>
<div class="a" style="left:0;top:200px;width:350px;height:20px;background:#484848"></div>
<div class="a" style="left:265px;top:200px;width:1px;height:20px;background:#3d3d3d"></div>
<div class="a" style="left:293px;top:200px;width:1px;height:20px;background:#3d3d3d"></div>
<div class="a" style="left:321px;top:200px;width:1px;height:20px;background:#3d3d3d"></div>
<svg style="left:87px;top:207px" width="7" height="6"><path d="M0 0H7L3.5 6Z" fill="#707070"/></svg>
<div class="t" style="left:103px;top:205px;color:#e2e2e2">R_eye_CPT</div>
<svg style="left:270px;top:202px" width="15" height="15" viewBox="0 0 15 15"><path d="M7.5 0.4Q11 0.8 14 2.4V9Q12 12.2 7.5 14.6Q3 12.2 1 9V2.4Q4 0.8 7.5 0.4Z" fill="#787878"/><path d="M7.5 2.4Q10 2.7 12.2 3.7V8.4Q10.8 10.8 7.5 12.6Q4.2 10.8 2.8 8.4V3.7Q5 2.7 7.5 2.4Z" fill="#4c4c4c"/><path d="M7.5 3.6L11.3 5.1V9.6L7.5 11.4L3.7 9.6V5.1Z" fill="#7c7c7c"/><path d="M3.7 5.1L7.5 6.6L11.3 5.1M7.5 6.6V11.4" stroke="#4c4c4c" stroke-width="0.7" fill="none"/></svg>
<svg style="left:326px;top:206px" width="15" height="9"><path d="M0.4 4.3Q2.5 0.2 7.3 0.2Q12.1 0.2 14.2 4.3Q12.1 8.4 7.3 8.4Q2.5 8.4 0.4 4.3Z" fill="#9a9a9a"/><circle cx="7.5" cy="4.3" r="2.7" fill="#353535"/><circle cx="6.4" cy="3.1" r="0.9" fill="#8a8a8a"/></svg>
<div class="a" style="left:0;top:220px;width:350px;height:20px;background:#424242"></div>
<div class="a" style="left:265px;top:220px;width:1px;height:20px;background:#3d3d3d"></div>
<div class="a" style="left:293px;top:220px;width:1px;height:20px;background:#3d3d3d"></div>
<div class="a" style="left:321px;top:220px;width:1px;height:20px;background:#3d3d3d"></div>
<div class="t" style="left:123px;top:225px;color:#e2e2e2">R_eyeLens001_REN</div>
<svg style="left:326px;top:226px" width="15" height="9"><path d="M0.4 4.3Q2.5 0.2 7.3 0.2Q12.1 0.2 14.2 4.3Q12.1 8.4 7.3 8.4Q2.5 8.4 0.4 4.3Z" fill="#9a9a9a"/><circle cx="7.5" cy="4.3" r="2.7" fill="#353535"/><circle cx="6.4" cy="3.1" r="0.9" fill="#8a8a8a"/></svg>
<div class="a" style="left:0;top:240px;width:350px;height:20px;background:#484848"></div>
<div class="a" style="left:265px;top:240px;width:1px;height:20px;background:#3d3d3d"></div>
<div class="a" style="left:293px;top:240px;width:1px;height:20px;background:#3d3d3d"></div>
<div class="a" style="left:321px;top:240px;width:1px;height:20px;background:#3d3d3d"></div>
<div class="t" style="left:123px;top:245px;color:#e2e2e2">R_eyeBacking001_REN</div>
<svg style="left:326px;top:246px" width="15" height="9"><path d="M0.4 4.3Q2.5 0.2 7.3 0.2Q12.1 0.2 14.2 4.3Q12.1 8.4 7.3 8.4Q2.5 8.4 0.4 4.3Z" fill="#9a9a9a"/><circle cx="7.5" cy="4.3" r="2.7" fill="#353535"/><circle cx="6.4" cy="3.1" r="0.9" fill="#8a8a8a"/></svg>
<div class="a" style="left:0;top:260px;width:350px;height:20px;background:#424242"></div>
<div class="a" style="left:265px;top:260px;width:1px;height:20px;background:#3d3d3d"></div>
<div class="a" style="left:293px;top:260px;width:1px;height:20px;background:#3d3d3d"></div>
<div class="a" style="left:321px;top:260px;width:1px;height:20px;background:#3d3d3d"></div>
<div class="t" style="left:123px;top:265px;color:#e2e2e2">R_eyeBulb001_REN</div>
<svg style="left:326px;top:266px" width="15" height="9"><path d="M0.4 4.3Q2.5 0.2 7.3 0.2Q12.1 0.2 14.2 4.3Q12.1 8.4 7.3 8.4Q2.5 8.4 0.4 4.3Z" fill="#9a9a9a"/><circle cx="7.5" cy="4.3" r="2.7" fill="#353535"/><circle cx="6.4" cy="3.1" r="0.9" fill="#8a8a8a"/></svg>
<div class="a" style="left:0;top:280px;width:350px;height:20px;background:#484848"></div>
<div class="a" style="left:265px;top:280px;width:1px;height:20px;background:#3d3d3d"></div>
<div class="a" style="left:293px;top:280px;width:1px;height:20px;background:#3d3d3d"></div>
<div class="a" style="left:321px;top:280px;width:1px;height:20px;background:#3d3d3d"></div>
<svg style="left:67px;top:287px" width="7" height="6"><path d="M0 0H7L3.5 6Z" fill="#707070"/></svg>
<div class="t" style="left:83px;top:285px;color:#e2e2e2">C_head_CPT</div>
<svg style="left:270px;top:282px" width="15" height="15" viewBox="0 0 15 15"><path d="M7.5 0.4Q11 0.8 14 2.4V9Q12 12.2 7.5 14.6Q3 12.2 1 9V2.4Q4 0.8 7.5 0.4Z" fill="#787878"/><path d="M7.5 2.4Q10 2.7 12.2 3.7V8.4Q10.8 10.8 7.5 12.6Q4.2 10.8 2.8 8.4V3.7Q5 2.7 7.5 2.4Z" fill="#4c4c4c"/><path d="M7.5 3.6L11.3 5.1V9.6L7.5 11.4L3.7 9.6V5.1Z" fill="#7c7c7c"/><path d="M3.7 5.1L7.5 6.6L11.3 5.1M7.5 6.6V11.4" stroke="#4c4c4c" stroke-width="0.7" fill="none"/></svg>
<svg style="left:326px;top:286px" width="15" height="9"><path d="M0.4 4.3Q2.5 0.2 7.3 0.2Q12.1 0.2 14.2 4.3Q12.1 8.4 7.3 8.4Q2.5 8.4 0.4 4.3Z" fill="#9a9a9a"/><circle cx="7.5" cy="4.3" r="2.7" fill="#353535"/><circle cx="6.4" cy="3.1" r="0.9" fill="#8a8a8a"/></svg>
<div class="a" style="left:0;top:300px;width:350px;height:20px;background:#424242"></div>
<div class="a" style="left:265px;top:300px;width:1px;height:20px;background:#3d3d3d"></div>
<div class="a" style="left:293px;top:300px;width:1px;height:20px;background:#3d3d3d"></div>
<div class="a" style="left:321px;top:300px;width:1px;height:20px;background:#3d3d3d"></div>
<div class="t" style="left:103px;top:305px;color:#e2e2e2">C_headShaftSpacer001_REN</div>
<svg style="left:326px;top:306px" width="15" height="9"><path d="M0.4 4.3Q2.5 0.2 7.3 0.2Q12.1 0.2 14.2 4.3Q12.1 8.4 7.3 8.4Q2.5 8.4 0.4 4.3Z" fill="#9a9a9a"/><circle cx="7.5" cy="4.3" r="2.7" fill="#353535"/><circle cx="6.4" cy="3.1" r="0.9" fill="#8a8a8a"/></svg>
<div class="a" style="left:0;top:320px;width:350px;height:20px;background:#484848"></div>
<div class="a" style="left:265px;top:320px;width:1px;height:20px;background:#3d3d3d"></div>
<div class="a" style="left:293px;top:320px;width:1px;height:20px;background:#3d3d3d"></div>
<div class="a" style="left:321px;top:320px;width:1px;height:20px;background:#3d3d3d"></div>
<div class="t" style="left:103px;top:325px;color:#e2e2e2">C_mouthLiner001_REN</div>
<svg style="left:326px;top:326px" width="15" height="9"><path d="M0.4 4.3Q2.5 0.2 7.3 0.2Q12.1 0.2 14.2 4.3Q12.1 8.4 7.3 8.4Q2.5 8.4 0.4 4.3Z" fill="#9a9a9a"/><circle cx="7.5" cy="4.3" r="2.7" fill="#353535"/><circle cx="6.4" cy="3.1" r="0.9" fill="#8a8a8a"/></svg>
</div>
<div class="a" style="left:1252px;top:581px;width:16px;height:355px;background:#4a4a4a"></div>
<div class="a" style="left:1256px;top:586px;width:8px;height:100px;border-radius:4px;background:#666"></div>
<div class="a" style="left:1256px;top:688px;width:8px;height:220px;border-radius:4px;background:#404040"></div>
<svg style="left:1256px;top:910px" width="8" height="7"><path d="M0 6.5H7.5L3.75 0.5Z" fill="#b0b0b0"/></svg>
<svg style="left:1256px;top:925px" width="8" height="7"><path d="M0 0.5H7.5L3.75 6.5Z" fill="#b0b0b0"/></svg>
<div class="pane" style="left:6px;top:948px;width:1268px;height:33px;border-radius:3px"></div>
<svg style="left:859px;top:506px" width="19" height="20"><path d="M2.5 0H16.5Q19 0 19 2.5V11.5Q19 14 16.5 14H12.5L9.6 19L6.7 14H2.5Q0 14 0 11.5V2.5Q0 0 2.5 0Z" fill="#808080"/><rect x="2" y="3.2" width="15" height="1.5" fill="#4a4a4a"/><rect x="2" y="6.2" width="15" height="1.5" fill="#4a4a4a"/><rect x="2" y="9.2" width="8" height="1.5" fill="#4a4a4a"/></svg>
<div class="a" style="left:385px;top:689px;width:126px;height:57px;border-radius:7px;background:#e0e0e0"></div>
<div class="a" style="left:498px;top:676px;width:26px;height:26px;border-radius:13px;background:#e0e0e0"></div>
<div class="a" style="left:502px;top:680px;width:18px;height:18px;border-radius:9px;background:#e0e0e0;box-shadow:inset 0 0 0 4px #262626"></div>
<div class="a" style="left:393px;top:697px;width:110px;height:41px;border-radius:4px;background:#789fc4;box-shadow:inset 0 0 0 1.2px #2a2e33"></div>
<div class="t" style="left:410px;top:712px;color:#eaeaea;font-weight:bold;font-size:11px;letter-spacing:0.35px">SceneReader</div>
<div class="a" style="left:443px;top:733px;width:10px;height:10px;border-radius:5px;background:#3f5f8a;box-shadow:inset 0 0 0 1px #1e2a3a"></div>
<div class="a" style="left:12px;top:953px;width:4px;height:4px;border-radius:2px;background:#3a3a3a"></div>
<div class="a" style="left:12px;top:959px;width:4px;height:4px;border-radius:2px;background:#3a3a3a"></div>
<div class="a" style="left:12px;top:965px;width:4px;height:4px;border-radius:2px;background:#3a3a3a"></div>
<div class="fld" style="left:19px;top:953px;width:31px;height:16px"></div>
<div class="t" style="left:22px;top:956px;color:#e4e4e4;">1</div>
<div class="fld" style="left:54px;top:953px;width:31px;height:16px"></div>
<div class="t" style="left:57px;top:956px;color:#e4e4e4;">1</div>
<svg style="left:0;top:0" width="1280" height="987"><g fill="#222"><rect x="97.00" y="964" width="2" height="6"/><rect x="107.38" y="964" width="2" height="6"/><rect x="117.76" y="964" width="2" height="6"/><rect x="128.14" y="964" width="2" height="6"/><rect x="138.52" y="960" width="2" height="10"/><rect x="148.90" y="964" width="2" height="6"/><rect x="159.28" y="964" width="2" height="6"/><rect x="169.66" y="964" width="2" height="6"/><rect x="180.04" y="964" width="2" height="6"/><rect x="190.42" y="956" width="2" height="14"/><rect x="200.80" y="964" width="2" height="6"/><rect x="211.18" y="964" width="2" height="6"/><rect x="221.56" y="964" width="2" height="6"/><rect x="231.94" y="964" width="2" height="6"/><rect x="242.32" y="960" width="2" height="10"/><rect x="252.70" y="964" width="2" height="6"/><rect x="263.08" y="964" width="2" height="6"/><rect x="273.46" y="964" width="2" height="6"/><rect x="283.84" y="964" width="2" height="6"/><rect x="294.22" y="956" width="2" height="14"/><rect x="304.60" y="964" width="2" height="6"/><rect x="314.98" y="964" width="2" height="6"/><rect x="325.36" y="964" width="2" height="6"/><rect x="335.74" y="964" width="2" height="6"/><rect x="346.12" y="960" width="2" height="10"/><rect x="356.50" y="964" width="2" height="6"/><rect x="366.88" y="964" width="2" height="6"/><rect x="377.26" y="964" width="2" height="6"/><rect x="387.64" y="964" width="2" height="6"/><rect x="398.02" y="956" width="2" height="14"/><rect x="408.40" y="964" width="2" height="6"/><rect x="418.78" y="964" width="2" height="6"/><rect x="429.16" y="964" width="2" height="6"/><rect x="439.54" y="964" width="2" height="6"/><rect x="449.92" y="960" width="2" height="10"/><rect x="460.30" y="964" width="2" height="6"/><rect x="470.68" y="964" width="2" height="6"/><rect x="481.06" y="964" width="2" height="6"/><rect x="491.44" y="964" width="2" height="6"/><rect x="501.82" y="956" width="2" height="14"/><rect x="512.20" y="964" width="2" height="6"/><rect x="522.58" y="964" width="2" height="6"/><rect x="532.96" y="964" width="2" height="6"/><rect x="543.34" y="964" width="2" height="6"/><rect x="553.72" y="960" width="2" height="10"/><rect x="564.10" y="964" width="2" height="6"/><rect x="574.48" y="964" width="2" height="6"/><rect x="584.86" y="964" width="2" height="6"/><rect x="595.24" y="964" width="2" height="6"/><rect x="605.62" y="956" width="2" height="14"/><rect x="616.00" y="964" width="2" height="6"/><rect x="626.38" y="964" width="2" height="6"/><rect x="636.76" y="964" width="2" height="6"/><rect x="647.14" y="964" width="2" height="6"/><rect x="657.52" y="960" width="2" height="10"/><rect x="667.90" y="964" width="2" height="6"/><rect x="678.28" y="964" width="2" height="6"/><rect x="688.66" y="964" width="2" height="6"/><rect x="699.04" y="964" width="2" height="6"/><rect x="709.42" y="956" width="2" height="14"/><rect x="719.80" y="964" width="2" height="6"/><rect x="730.18" y="964" width="2" height="6"/><rect x="740.56" y="964" width="2" height="6"/><rect x="750.94" y="964" width="2" height="6"/><rect x="761.32" y="960" width="2" height="10"/><rect x="771.70" y="964" width="2" height="6"/><rect x="782.08" y="964" width="2" height="6"/><rect x="792.46" y="964" width="2" height="6"/><rect x="802.84" y="964" width="2" height="6"/><rect x="813.22" y="956" width="2" height="14"/><rect x="823.60" y="964" width="2" height="6"/><rect x="833.98" y="964" width="2" height="6"/><rect x="844.36" y="964" width="2" height="6"/><rect x="854.74" y="964" width="2" height="6"/><rect x="865.12" y="960" width="2" height="10"/><rect x="875.50" y="964" width="2" height="6"/><rect x="885.88" y="964" width="2" height="6"/><rect x="896.26" y="964" width="2" height="6"/><rect x="906.64" y="964" width="2" height="6"/><rect x="917.02" y="956" width="2" height="14"/><rect x="927.40" y="964" width="2" height="6"/><rect x="937.78" y="964" width="2" height="6"/><rect x="948.16" y="964" width="2" height="6"/><rect x="958.54" y="964" width="2" height="6"/><rect x="968.92" y="960" width="2" height="10"/><rect x="979.30" y="964" width="2" height="6"/><rect x="989.68" y="964" width="2" height="6"/><rect x="1000.06" y="964" width="2" height="6"/><rect x="1010.44" y="964" width="2" height="6"/><rect x="1020.82" y="956" width="2" height="14"/><rect x="1031.20" y="964" width="2" height="6"/><rect x="1041.58" y="964" width="2" height="6"/><rect x="1051.96" y="964" width="2" height="6"/><rect x="1062.34" y="964" width="2" height="6"/><rect x="1072.72" y="960" width="2" height="10"/><rect x="1083.10" y="964" width="2" height="6"/><rect x="1093.48" y="964" width="2" height="6"/><rect x="1103.86" y="964" width="2" height="6"/><rect x="1114.24" y="964" width="2" height="6"/></g></svg>
<div class="a" style="left:88px;top:952px;width:2px;height:18px;background:#f0d820"></div>
<div class="t" style="left:94px;top:956px;color:#f0d820;font-weight:bold;font-size:9px">1</div>
<svg style="left:1119px;top:954px" width="36" height="14"><g fill="#a0a0a0"><rect x="0.9" y="0" width="2.3" height="13"/><path d="M3 6.4L7 2.4V10.4Z"/><path d="M12 0.7L21.3 6.4L12 12.5L13.9 6.4Z"/><rect x="31.9" y="0" width="2.3" height="13"/><path d="M27.8 2.4V10.4L32 6.4Z"/></g></svg>
<div class="fld" style="left:1158px;top:952px;width:40px;height:17px"></div>
<div class="t" style="left:1161px;top:956px;color:#e4e4e4;">1</div>
<div class="fld" style="left:1202px;top:952px;width:31px;height:17px"></div>
<div class="t" style="left:1204px;top:956px;color:#e4e4e4;">100</div>
<div class="fld" style="left:1237px;top:952px;width:31px;height:17px"></div>
<div class="t" style="left:1239px;top:956px;color:#e4e4e4;">100</div>
</body></html>
